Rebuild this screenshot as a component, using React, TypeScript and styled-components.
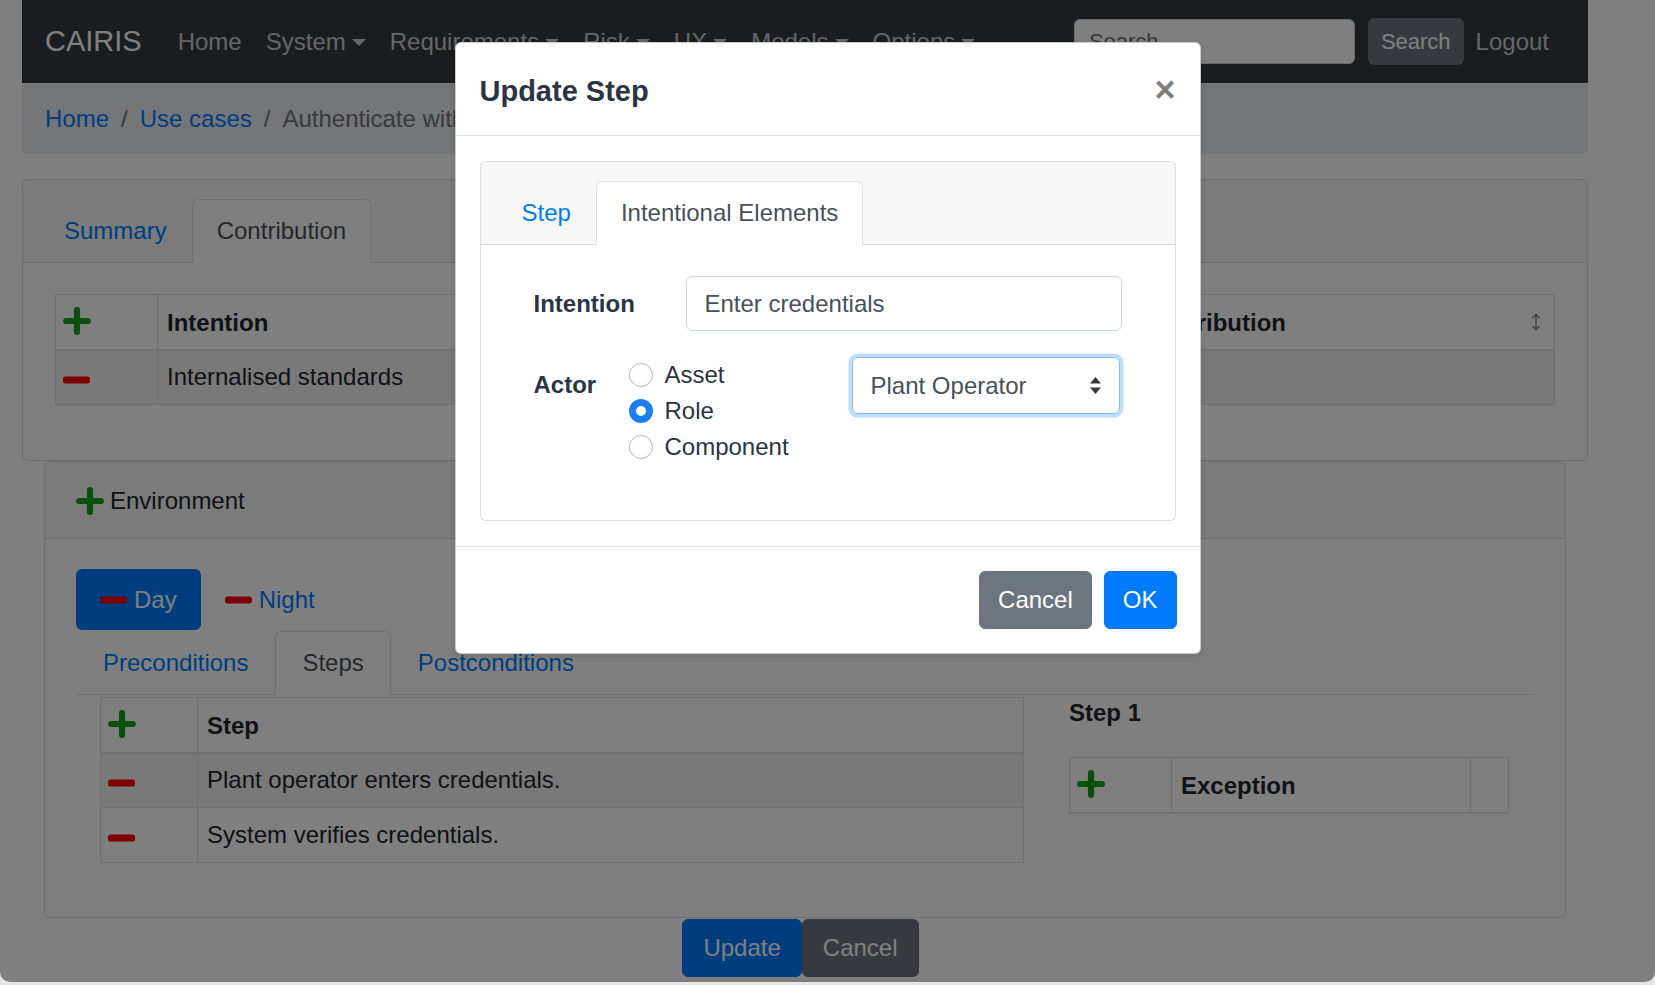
import React from "react";
import styled, { createGlobalStyle } from "styled-components";

const GlobalStyle = createGlobalStyle`
  html, body { margin: 0; padding: 0; }
  body {
    background: #e6e6e6;
    font-family: "Liberation Sans", Arial, Helvetica, sans-serif;
    font-size: 24px;
    color: #212529;
  }
  * { box-sizing: border-box; }
`;

const Window = styled.div`
  position: relative;
  width: 1655px;
  height: 982px;
  overflow: hidden;
  background: #fff;
  border-bottom-left-radius: 10px;
  border-bottom-right-radius: 10px;
`;

const Page = styled.div`
  width: 1566px;
  margin-left: 22px;
  display: flex;
  flex-direction: column;
`;

/* ---------- Navbar ---------- */
const Navbar = styled.nav`
  height: 83px;
  background: #343a40;
  display: flex;
  align-items: center;
  padding: 0 27px 0 23px;
`;

const Brand = styled.span`
  font-size: 29px;
  color: #fff;
  margin-right: 24px;
`;

const NavLink = styled.span<{ $dropdown?: boolean }>`
  color: rgba(255, 255, 255, 0.75);
  padding: 0 12px;
  font-size: 24px;
  white-space: nowrap;
  &::after {
    content: ${(p) => (p.$dropdown ? '""' : "none")};
    display: inline-block;
    margin-left: 6px;
    vertical-align: 4px;
    border-top: 7px solid;
    border-right: 7px solid transparent;
    border-left: 7px solid transparent;
  }
`;

const NavRight = styled.div`
  margin-left: auto;
  display: flex;
  align-items: center;
`;

const SearchInput = styled.input`
  width: 281px;
  height: 45px;
  border: 1px solid #ced4da;
  border-radius: 6px;
  padding: 0 14px;
  font-family: inherit;
  font-size: 22px;
  color: #495057;
  background: #fff;
  &::placeholder { color: #6c757d; }
`;

const SearchButton = styled.button`
  height: 47px;
  margin-left: 13px;
  padding: 0 13px;
  border: none;
  border-radius: 6px;
  background: #6c757d;
  color: #fff;
  font-family: inherit;
  font-size: 22px;
`;

/* ---------- Breadcrumb ---------- */
const Breadcrumb = styled.ol`
  margin: 0;
  list-style: none;
  height: 71px;
  background: #e9ecef;
  border-radius: 0 0 6px 6px;
  display: flex;
  align-items: center;
  padding: 0 23px;
  font-size: 24px;
`;

const Crumb = styled.li<{ $active?: boolean }>`
  color: ${(p) => (p.$active ? "#6c757d" : "#007bff")};
  white-space: nowrap;
`;

const CrumbSep = styled.li`
  color: #6c757d;
  padding: 0 12px;
`;

/* ---------- Cards ---------- */
const Card = styled.section<{ $inset?: boolean; $top?: number }>`
  border: 1px solid rgba(0, 0, 0, 0.125);
  border-radius: 6px;
  background: #fff;
  margin: ${(p) => `${p.$top ?? 0}px ${p.$inset ? 22 : 0}px 0`};
`;

const TabHeader = styled.div<{ $bg?: string; $pt?: number }>`
  background: ${(p) => p.$bg ?? "rgba(0, 0, 0, 0.03)"};
  border-bottom: 1px solid rgba(0, 0, 0, 0.125);
  padding: ${(p) => p.$pt ?? 19}px 16px 0;
  border-radius: 6px 6px 0 0;
`;

const TabList = styled.div<{ $line?: boolean }>`
  display: flex;
  ${(p) => (p.$line ? "border-bottom: 1px solid #dee2e6;" : "")}
`;

const Tab = styled.div<{ $active?: boolean; $h?: number; $px?: number }>`
  height: ${(p) => p.$h ?? 64}px;
  display: flex;
  align-items: center;
  padding: 0 ${(p) => p.$px ?? 24}px;
  border: 1px solid ${(p) => (p.$active ? "#dee2e6" : "transparent")};
  border-bottom-color: ${(p) => (p.$active ? "#fff" : "transparent")};
  border-radius: 6px 6px 0 0;
  background: ${(p) => (p.$active ? "#fff" : "transparent")};
  color: ${(p) => (p.$active ? "#495057" : "#007bff")};
  font-size: 24px;
  white-space: nowrap;
  margin-bottom: -1px;
`;

const CardBody = styled.div<{ $pad: string }>`
  padding: ${(p) => p.$pad};
`;

const EnvHeader = styled.div`
  height: 77px;
  display: flex;
  align-items: center;
  gap: 6px;
  padding: 2px 0 0 31px;
  background: rgba(0, 0, 0, 0.03);
  border-bottom: 1px solid rgba(0, 0, 0, 0.125);
  border-radius: 6px 6px 0 0;
  font-size: 24px;
  color: #212529;
`;

/* ---------- Tables ---------- */
const DataTable = styled.table<{ $width: number; $mb?: number }>`
  width: ${(p) => p.$width}px;
  border-collapse: collapse;
  table-layout: fixed;
  border: 1px solid #dee2e6;
  font-size: 24px;
  color: #212529;
  margin-bottom: ${(p) => p.$mb ?? 24}px;
  tbody tr:nth-child(odd) td { background: rgba(0, 0, 0, 0.05); }
`;

const HeadCell = styled.th<{ $w?: number; $icon?: boolean }>`
  width: ${(p) => (p.$w ? `${p.$w}px` : "auto")};
  height: 55px;
  padding: ${(p) => (p.$icon ? "4px 0 0 7px" : "2px 9px 0")};
  border: 1px solid #dee2e6;
  border-bottom-width: 2px;
  text-align: left;
  font-weight: bold;
  vertical-align: middle;
  position: relative;
`;

const Cell = styled.td<{ $icon?: boolean }>`
  height: 55px;
  padding: ${(p) => (p.$icon ? "0 0 2px 7px" : "0 9px")};
  border: 1px solid #dee2e6;
  vertical-align: middle;
`;

const SortMark = styled.span`
  position: absolute;
  right: 13px;
  top: 50%;
  transform: translateY(-50%);
  display: flex;
`;

/* ---------- Environment body ---------- */
const Pills = styled.div`
  display: flex;
`;

const Pill = styled.div<{ $active?: boolean }>`
  height: 61px;
  display: flex;
  align-items: center;
  gap: 7px;
  padding: 0 24px;
  border-radius: 6px;
  background: ${(p) => (p.$active ? "#007bff" : "transparent")};
  color: ${(p) => (p.$active ? "#fff" : "#007bff")};
  font-size: 24px;
`;

const StepTabs = styled(TabList)`
  margin-top: 1px;
`;

const StepsRow = styled.div`
  display: flex;
  padding: 2px 0 0 24px;
`;

const StepsCol = styled.div`
  width: 924px;
`;

const SideCol = styled.div`
  margin-left: 45px;
  width: 441px;
`;

const SideTitle = styled.h5`
  margin: 0 0 28px;
  font-size: 24px;
  line-height: 32px;
  font-weight: bold;
  color: #212529;
`;

const BottomBar = styled.div`
  display: flex;
  justify-content: center;
  padding: 1px 9px 0 0;
`;

const Btn = styled.button<{ $variant: "primary" | "secondary"; $h?: number; $px?: number }>`
  height: ${(p) => p.$h ?? 58}px;
  padding: 0 ${(p) => p.$px ?? 20}px;
  border: 1px solid ${(p) => (p.$variant === "primary" ? "#007bff" : "#6c757d")};
  border-radius: 6px;
  background: ${(p) => (p.$variant === "primary" ? "#007bff" : "#6c757d")};
  color: #fff;
  font-family: inherit;
  font-size: 24px;
`;

/* ---------- Modal ---------- */
const Overlay = styled.div`
  position: absolute;
  inset: 0;
  background: rgba(0, 0, 0, 0.5);
  display: flex;
  justify-content: center;
  align-items: flex-start;
  padding-top: 42px;
  z-index: 10;
`;

const Modal = styled.div`
  width: 746px;
  background: #fff;
  border: 1px solid rgba(0, 0, 0, 0.2);
  border-radius: 6px;
  box-shadow: 0 2px 6px rgba(0, 0, 0, 0.15);
  color: #212529;
`;

const ModalHeader = styled.div`
  height: 93px;
  display: flex;
  align-items: center;
  justify-content: space-between;
  padding: 4px 24px 0;
  border-bottom: 1px solid #dee2e6;
`;

const ModalTitle = styled.h5`
  margin: 0;
  font-size: 29px;
  font-weight: bold;
  color: #2b3440;
`;

const Close = styled.span`
  font-size: 36px;
  font-weight: bold;
  line-height: 1;
  color: #000;
  opacity: 0.5;
  margin-top: -2px;
`;

const ModalBody = styled.div`
  padding: 25px 24px 25px;
`;

const FormBody = styled.div`
  padding: 31px 53px 55px;
`;

const FormRow = styled.div<{ $mt?: number }>`
  display: flex;
  align-items: flex-start;
  margin-top: ${(p) => p.$mt ?? 0}px;
`;

const FormLabel = styled.label<{ $w: number }>`
  width: ${(p) => p.$w}px;
  flex: none;
  padding-top: 10px;
  line-height: 36px;
  font-weight: bold;
  font-size: 24px;
  color: #2b3440;
`;

const TextInput = styled.div`
  flex: 1;
  height: 55px;
  border: 1px solid #ced4da;
  border-radius: 6px;
  display: flex;
  align-items: center;
  padding: 0 18px;
  font-size: 24px;
  color: #495057;
`;

const RadioGroup = styled.div`
  width: 223px;
  flex: none;
  display: flex;
  flex-direction: column;
`;

const RadioItem = styled.div`
  height: 36px;
  display: flex;
  align-items: center;
  gap: 12px;
  font-size: 24px;
  color: #2b3440;
`;

const RadioDot = styled.span<{ $checked?: boolean }>`
  width: 24px;
  height: 24px;
  border-radius: 50%;
  flex: none;
  background: #fff;
  border: ${(p) => (p.$checked ? "7.5px solid #1a7ef7" : "1.5px solid #b3b3b3")};
`;

const Select = styled.div`
  width: 268px;
  height: 57px;
  border: 1px solid #80bdff;
  border-radius: 6px;
  box-shadow: 0 0 0 3.6px rgba(0, 123, 255, 0.25);
  display: flex;
  align-items: center;
  justify-content: space-between;
  padding: 0 18px;
  font-size: 24px;
  color: #495057;
`;

const ModalFooter = styled.div`
  display: flex;
  justify-content: flex-end;
  gap: 12px;
  padding: 24px 23px 24px;
  border-top: 1px solid #dee2e6;
`;

/* ---------- Icons ---------- */
const PlusIcon = () => (
  <svg width="28" height="28" viewBox="0 0 28 28">
    <path d="M14 3.2v21.6M3.2 14h21.6" stroke="#14a014" strokeWidth="6.2" strokeLinecap="round" />
  </svg>
);

const MinusIcon = () => (
  <svg width="27" height="8" viewBox="0 0 27 8">
    <rect x="0" y="0.5" width="27" height="7" rx="2.5" fill="#ff0000" />
  </svg>
);

const SortIcon = () => (
  <svg width="10" height="18" viewBox="0 0 10 18">
    <path d="M5 1.5v15M1.5 5L5 1.5 8.5 5M1.5 13L5 16.5 8.5 13" stroke="#8a8a8a" strokeWidth="1.5" fill="none" />
  </svg>
);

const SelectArrows = () => (
  <svg width="11" height="17" viewBox="0 0 11 17">
    <path d="M5.5 0L11 6.5H0Z M0 10.5H11L5.5 17Z" fill="#343a40" />
  </svg>
);

export default function App() {
  return (
    <>
      <GlobalStyle />
      <Window>
        <Page>
          <Navbar>
            <Brand>CAIRIS</Brand>
            <NavLink>Home</NavLink>
            <NavLink $dropdown>System</NavLink>
            <NavLink $dropdown>Requirements</NavLink>
            <NavLink $dropdown>Risk</NavLink>
            <NavLink $dropdown>UX</NavLink>
            <NavLink $dropdown>Models</NavLink>
            <NavLink $dropdown>Options</NavLink>
            <NavRight>
              <SearchInput placeholder="Search" readOnly />
              <SearchButton>Search</SearchButton>
              <NavLink>Logout</NavLink>
            </NavRight>
          </Navbar>

          <Breadcrumb>
            <Crumb>Home</Crumb>
            <CrumbSep>/</CrumbSep>
            <Crumb>Use cases</Crumb>
            <CrumbSep>/</CrumbSep>
            <Crumb $active>Authenticate with credentials</Crumb>
          </Breadcrumb>

          <Card $top={25}>
            <TabHeader>
              <TabList>
                <Tab>Summary</Tab>
                <Tab $active>Contribution</Tab>
              </TabList>
            </TabHeader>
            <CardBody $pad="31px 32px 31px">
              <DataTable $width={1500}>
                <thead>
                  <tr>
                    <HeadCell $w={102} $icon>
                      <PlusIcon />
                    </HeadCell>
                    <HeadCell $w={975}>
                      Intention
                      <SortMark>
                        <SortIcon />
                      </SortMark>
                    </HeadCell>
                    <HeadCell>
                      Contribution
                      <SortMark>
                        <SortIcon />
                      </SortMark>
                    </HeadCell>
                  </tr>
                </thead>
                <tbody>
                  <tr>
                    <Cell $icon>
                      <MinusIcon />
                    </Cell>
                    <Cell>Internalised standards</Cell>
                    <Cell>Make</Cell>
                  </tr>
                </tbody>
              </DataTable>
            </CardBody>
          </Card>

          <Card $inset>
            <EnvHeader>
              <PlusIcon />
              Environment
            </EnvHeader>
            <CardBody $pad="30px 31px 31px">
              <Pills>
                <Pill $active>
                  <MinusIcon />
                  Day
                </Pill>
                <Pill>
                  <MinusIcon />
                  Night
                </Pill>
              </Pills>
              <StepTabs $line>
                <Tab $px={26}>Preconditions</Tab>
                <Tab $px={26} $active>
                  Steps
                </Tab>
                <Tab $px={26}>Postconditions</Tab>
              </StepTabs>
              <StepsRow>
                <StepsCol>
                  <DataTable $width={924} $mb={23}>
                    <thead>
                      <tr>
                        <HeadCell $w={97} $icon>
                          <PlusIcon />
                        </HeadCell>
                        <HeadCell>Step</HeadCell>
                      </tr>
                    </thead>
                    <tbody>
                      <tr>
                        <Cell $icon>
                          <MinusIcon />
                        </Cell>
                        <Cell>Plant operator enters credentials.</Cell>
                      </tr>
                      <tr>
                        <Cell $icon>
                          <MinusIcon />
                        </Cell>
                        <Cell>System verifies credentials.</Cell>
                      </tr>
                    </tbody>
                  </DataTable>
                </StepsCol>
                <SideCol>
                  <SideTitle>Step 1</SideTitle>
                  <DataTable $width={440} $mb={0}>
                    <thead>
                      <tr>
                        <HeadCell $w={102} $icon>
                          <PlusIcon />
                        </HeadCell>
                        <HeadCell $w={299}>Exception</HeadCell>
                        <HeadCell />
                      </tr>
                    </thead>
                  </DataTable>
                </SideCol>
              </StepsRow>
            </CardBody>
          </Card>

          <BottomBar>
            <Btn $variant="primary">Update</Btn>
            <Btn $variant="secondary">Cancel</Btn>
          </BottomBar>
        </Page>

        <Overlay>
          <Modal>
            <ModalHeader>
              <ModalTitle>Update Step</ModalTitle>
              <Close>×</Close>
            </ModalHeader>
            <ModalBody>
              <Card>
                <TabHeader $bg="#f7f7f7">
                  <TabList>
                    <Tab $h={64}>Step</Tab>
                    <Tab $h={64} $active>
                      Intentional Elements
                    </Tab>
                  </TabList>
                </TabHeader>
                <FormBody>
                  <FormRow>
                    <FormLabel $w={152}>Intention</FormLabel>
                    <TextInput>Enter credentials</TextInput>
                  </FormRow>
                  <FormRow $mt={26}>
                    <FormLabel $w={95}>Actor</FormLabel>
                    <RadioGroup>
                      <RadioItem>
                        <RadioDot />
                        Asset
                      </RadioItem>
                      <RadioItem>
                        <RadioDot $checked />
                        Role
                      </RadioItem>
                      <RadioItem>
                        <RadioDot />
                        Component
                      </RadioItem>
                    </RadioGroup>
                    <Select>
                      Plant Operator
                      <SelectArrows />
                    </Select>
                  </FormRow>
                </FormBody>
              </Card>
            </ModalBody>
            <ModalFooter>
              <Btn $variant="secondary" $h={58} $px={18}>
                Cancel
              </Btn>
              <Btn $variant="primary" $h={58} $px={18}>
                OK
              </Btn>
            </ModalFooter>
          </Modal>
        </Overlay>
      </Window>
    </>
  );
}
